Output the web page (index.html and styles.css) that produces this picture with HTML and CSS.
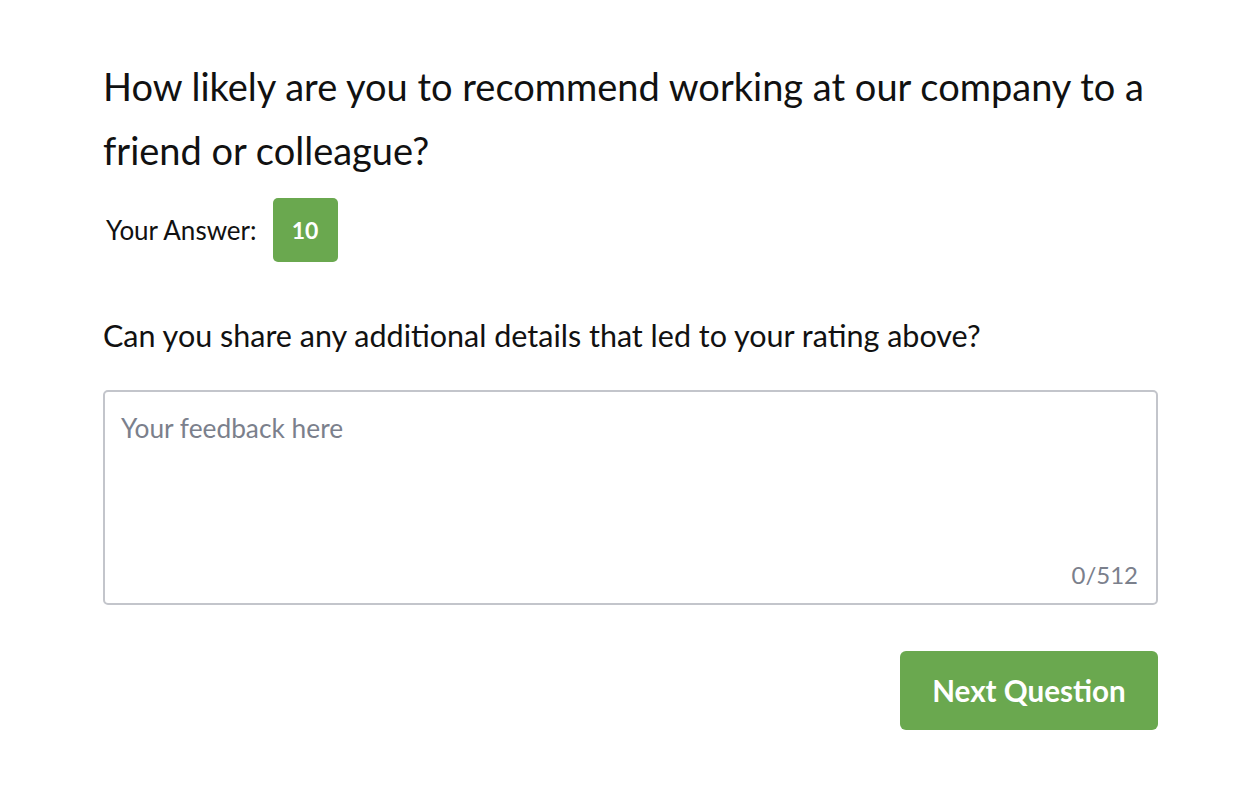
FILE: index.html
```html
<!DOCTYPE html>
<html>
<head>
<meta charset="utf-8">
<link rel="stylesheet" href="styles.css">
</head>
<body>
<main class="survey">
  <h1 class="question">How likely are you to recommend working at our company to a friend or colleague?</h1>
  <div class="answer-row">
    <span class="answer-label">Your Answer:</span>
    <span class="answer-badge">10</span>
  </div>
  <p class="followup">Can you share any additional details that led to your rating above?</p>
  <div class="feedback">
    <textarea class="feedback-input" placeholder="Your feedback here"></textarea>
    <span class="counter">0/512</span>
  </div>
  <div class="actions">
    <button class="next-btn">Next Question</button>
  </div>
</main>
</body>
</html>
```

FILE: styles.css
```css
html, body {
  margin: 0;
  padding: 0;
  background: #ffffff;
}
body {
  font-family: "Lato", "Open Sans", sans-serif;
  color: #111111;
}
.survey {
  width: 1055px;
  margin-left: 103px;
  padding-top: 54px;
}
.question {
  margin: 0;
  font-size: 38px;
  font-weight: 400;
  line-height: 64px;
}
.answer-row {
  display: flex;
  align-items: center;
  margin-top: 16px;
  padding-left: 3px;
  gap: 16px;
}
.answer-label {
  font-size: 26px;
}
.answer-badge {
  width: 65px;
  height: 64px;
  background: #6aa84f;
  border-radius: 5px;
  color: #ffffff;
  font-weight: 700;
  font-size: 23px;
  display: flex;
  align-items: center;
  justify-content: center;
}
.followup {
  margin: 53px 0 0 0;
  font-size: 30.5px;
  line-height: 40px;
}
.feedback {
  position: relative;
  margin-top: 35px;
  height: 215px;
}
.feedback-input {
  box-sizing: border-box;
  width: 100%;
  height: 100%;
  border: 2px solid #c3c5cb;
  border-radius: 5px;
  padding: 20px 16px;
  font-family: inherit;
  font-size: 26.3px;
  resize: none;
  outline: none;
}
.feedback-input::placeholder {
  color: #7b808c;
}
.counter {
  position: absolute;
  right: 20px;
  bottom: 16px;
  font-size: 24px;
  color: #7b808c;
}
.actions {
  display: flex;
  justify-content: flex-end;
  margin-top: 46px;
}
.next-btn {
  width: 258px;
  height: 79px;
  border: none;
  border-radius: 6px;
  background: #6aa84f;
  color: #ffffff;
  font-family: inherit;
  font-weight: 700;
  font-size: 29.6px;
}
```
